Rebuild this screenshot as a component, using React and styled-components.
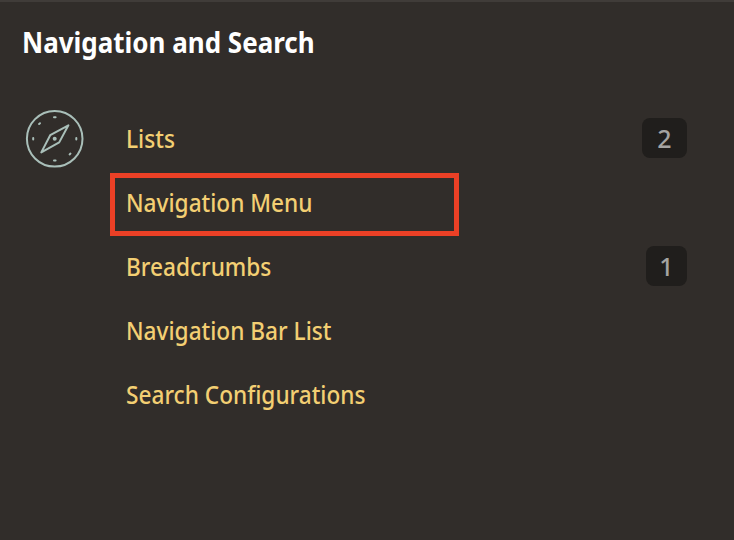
import React from "react";
import styled, { createGlobalStyle } from "styled-components";

const GlobalStyle = createGlobalStyle`
  * { box-sizing: border-box; }
  body { margin: 0; background: #312d2a; }
`;

const Panel = styled.section`
  width: 734px;
  height: 540px;
  overflow: hidden;
  background: #312d2a;
  border-top: 2px solid #403c39;
  font-family: "Noto Sans", "Open Sans", sans-serif;
`;

const Title = styled.h2`
  margin: 0;
  padding: 20px 0 0;
  margin-left: 22px;
  height: 104px;
  color: #fff;
  font-size: 28px;
  line-height: 40px;
  font-weight: 700;
  white-space: nowrap;
  transform: scaleX(0.928);
  transform-origin: left top;
`;

const Content = styled.div`
  display: flex;
`;

const IconColumn = styled.div`
  flex: 0 0 110px;
  padding: 2px 0 0 24px;
`;

const CompassSvg = styled.svg`
  display: block;
  width: 62px;
  height: 62px;
  fill: none;
  stroke: #a9bfb9;
  stroke-width: 2;
  stroke-linecap: round;
  stroke-linejoin: round;
`;

const Links = styled.ul`
  flex: 1;
  margin: 0;
  padding: 0 47px 0 0;
  list-style: none;
`;

const Row = styled.li`
  display: flex;
  align-items: center;
  justify-content: space-between;
  height: 64px;
`;

const LinkArea = styled.div`
  display: flex;
  align-items: center;
  width: 349px;
  height: 63px;
  margin: 5px 0 0;
  padding: 0 0 5px 11px;
  border: 5px solid ${(p) => (p.$highlighted ? "#eb4026" : "transparent")};
`;

const Link = styled.a`
  color: #f3cf73;
  font-size: 25px;
  line-height: 36px;
  font-weight: 500;
  white-space: nowrap;
  text-decoration: none;
  transform: scaleX(0.906);
  transform-origin: left center;
`;

const Badge = styled.span`
  display: flex;
  align-items: center;
  justify-content: center;
  width: ${(p) => p.$width}px;
  height: 40px;
  border-radius: 8px;
  background: #201e1c;
  color: #a5a4a2;
  font-size: 25px;
  line-height: 36px;
  font-weight: 500;
`;

const items = [
  { label: "Lists", count: 2, badgeWidth: 45 },
  { label: "Navigation Menu", highlighted: true },
  { label: "Breadcrumbs", count: 1, badgeWidth: 41 },
  { label: "Navigation Bar List" },
  { label: "Search Configurations" },
];

function Compass() {
  return (
    <CompassSvg viewBox="24 108 62 62" aria-hidden="true">
      <circle cx="54.7" cy="138.8" r="27.8" />
      <path d="M68.4 125.3 50.2 135.2 41.3 152.4 59.2 142.4Z" />
      <circle cx="54.7" cy="138.8" r="2" fill="#a9bfb9" stroke="none" />
      <path d="M54 117.2h1.6M54 160.4h1.6M33.2 138v1.6M76.3 138v1.6M39.1 124l.9-.8M69.6 154.4l.9-.8" />
    </CompassSvg>
  );
}

export default function App() {
  return (
    <>
      <GlobalStyle />
      <Panel>
        <Title>Navigation and Search</Title>
        <Content>
          <IconColumn>
            <Compass />
          </IconColumn>
          <Links>
            {items.map((item) => (
              <Row key={item.label}>
                <LinkArea $highlighted={item.highlighted}>
                  <Link>{item.label}</Link>
                </LinkArea>
                {item.count && <Badge $width={item.badgeWidth}>{item.count}</Badge>}
              </Row>
            ))}
          </Links>
        </Content>
      </Panel>
    </>
  );
}
